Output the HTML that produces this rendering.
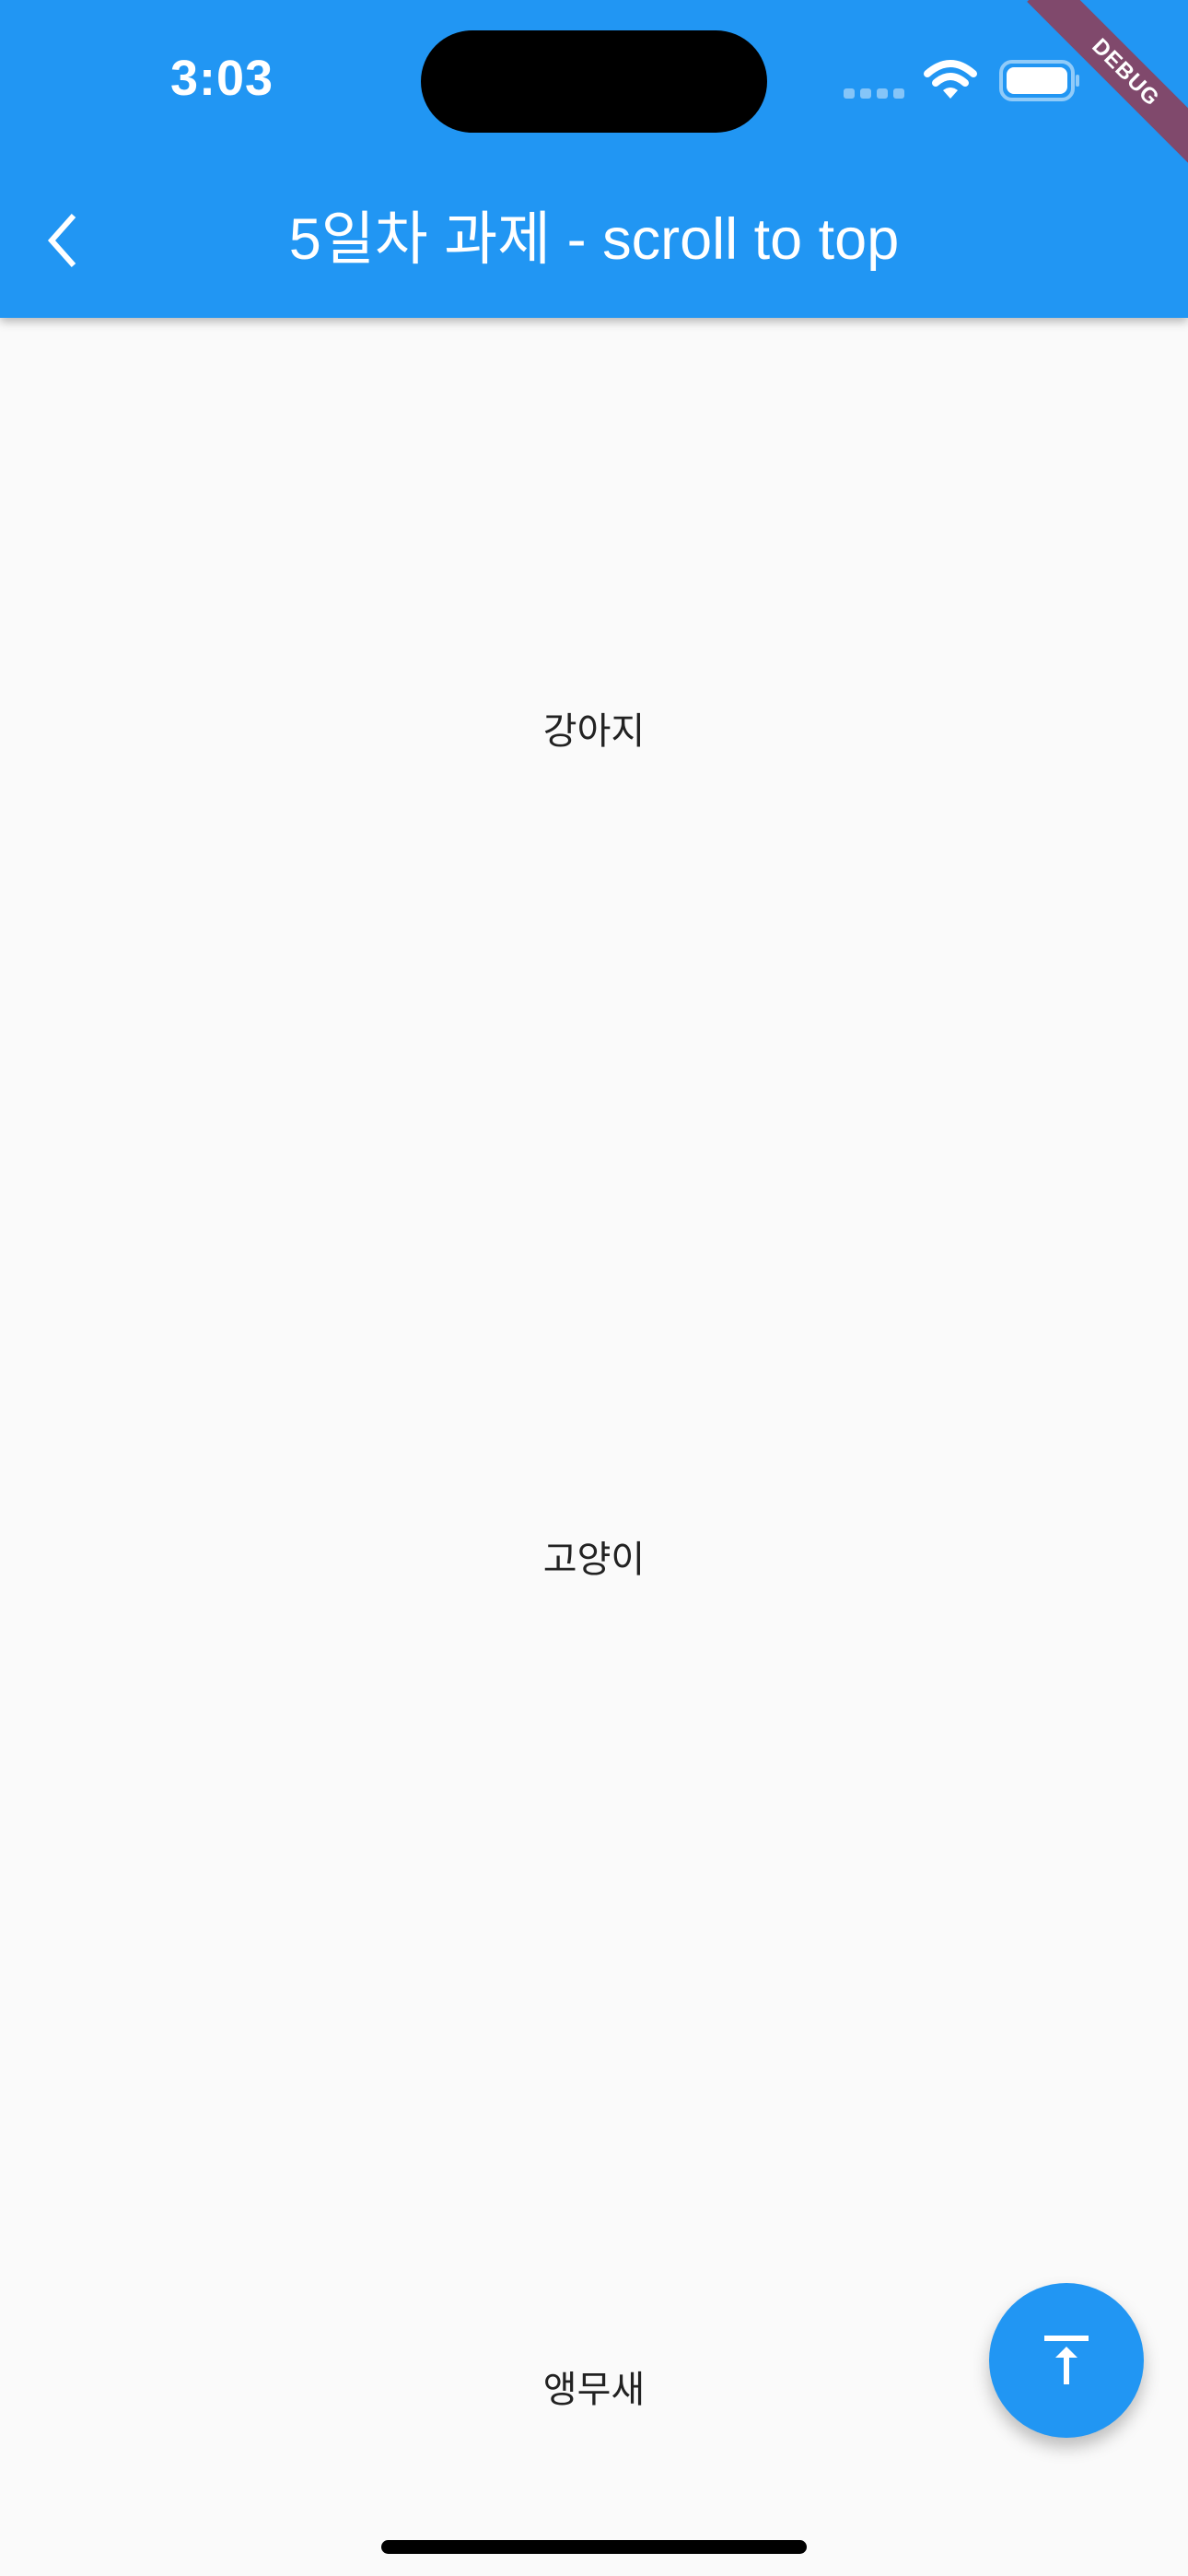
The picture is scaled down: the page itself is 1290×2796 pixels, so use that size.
<!DOCTYPE html>
<html><head><meta charset="utf-8"><style>
html,body{margin:0;padding:0}
body{width:1290px;height:2796px;background:#fafafa;position:relative;overflow:hidden;font-family:"Liberation Sans","Noto Sans CJK KR",sans-serif}
.bar{position:absolute;left:0;top:0;width:1290px;height:345px;background:#2196F3;box-shadow:0 4px 10px rgba(0,0,0,0.28)}
.time{position:absolute;left:185px;top:54px;color:#fff;font-size:54px;font-weight:bold;letter-spacing:1px}
.island{position:absolute;left:457px;top:33px;width:376px;height:111px;background:#000;border-radius:56px}
.title{position:absolute;left:0;width:1290px;top:220px;text-align:center;color:#fff;font-size:63px;line-height:80px}
.lbl{position:absolute;left:0;width:1290px;text-align:center;color:#222;font-size:40px;line-height:50px}
.fab{position:absolute;left:1074px;top:2478px;width:168px;height:168px;border-radius:50%;background:#2196F3;box-shadow:0 10px 18px rgba(0,0,0,0.25)}
.home{position:absolute;left:414px;top:2757px;width:462px;height:15px;background:#000;border-radius:8px}
.banner{position:absolute;left:1092px;top:58px;width:260px;height:42px;background:rgba(183,28,28,0.63);transform:rotate(45deg);transform-origin:center;color:#fff;font-weight:bold;font-size:24px;line-height:42px;text-align:center;letter-spacing:1px}
</style></head><body>
<div class="bar">
<div class="time">3:03</div>
<div class="island"></div>
<svg style="position:absolute;left:910px;top:60px" width="270" height="54" viewBox="0 0 270 54">
<g fill="rgba(255,255,255,0.45)"><rect x="6" y="36" width="12" height="11" rx="3"/><rect x="24" y="36" width="12" height="11" rx="3"/><rect x="42" y="36" width="12" height="11" rx="3"/><rect x="60" y="36" width="12" height="11" rx="3"/></g>
<g fill="none" stroke="#fff" stroke-width="8" stroke-linecap="round"><path d="M97 20 Q122 -2 147 20"/><path d="M106 30 Q122 16 138 30"/></g>
<path d="M114 38 Q122 32 130 38 L122 47 Z" fill="#fff"/>
<rect x="177" y="7" width="78" height="41" rx="12" fill="none" stroke="rgba(255,255,255,0.5)" stroke-width="4"/>
<rect x="183" y="13" width="66" height="29" rx="8" fill="#fff"/>
<rect x="258" y="21" width="4" height="13" rx="2" fill="rgba(255,255,255,0.5)"/>
</svg>
<svg style="position:absolute;left:44px;top:228px" width="46" height="66" viewBox="0 0 46 66"><path d="M36 6 L12 33 L36 60" fill="none" stroke="#fff" stroke-width="6"/></svg>
<div class="title">5일차 과제 - scroll to top</div>
</div>
<div class="banner">DEBUG</div>
<div class="lbl" style="top:769px">강아지</div>
<div class="lbl" style="top:1668px">고양이</div>
<div class="lbl" style="top:2569px">앵무새</div>
<div class="fab"><svg width="168" height="168" viewBox="0 0 168 168"><rect x="60" y="57" width="48" height="6" fill="#fff"/><path d="M84 69 L96 81 L87 81 L87 110 L81 110 L81 81 L72 81 Z" fill="#fff"/></svg></div>
<div class="home"></div>
</body></html>
